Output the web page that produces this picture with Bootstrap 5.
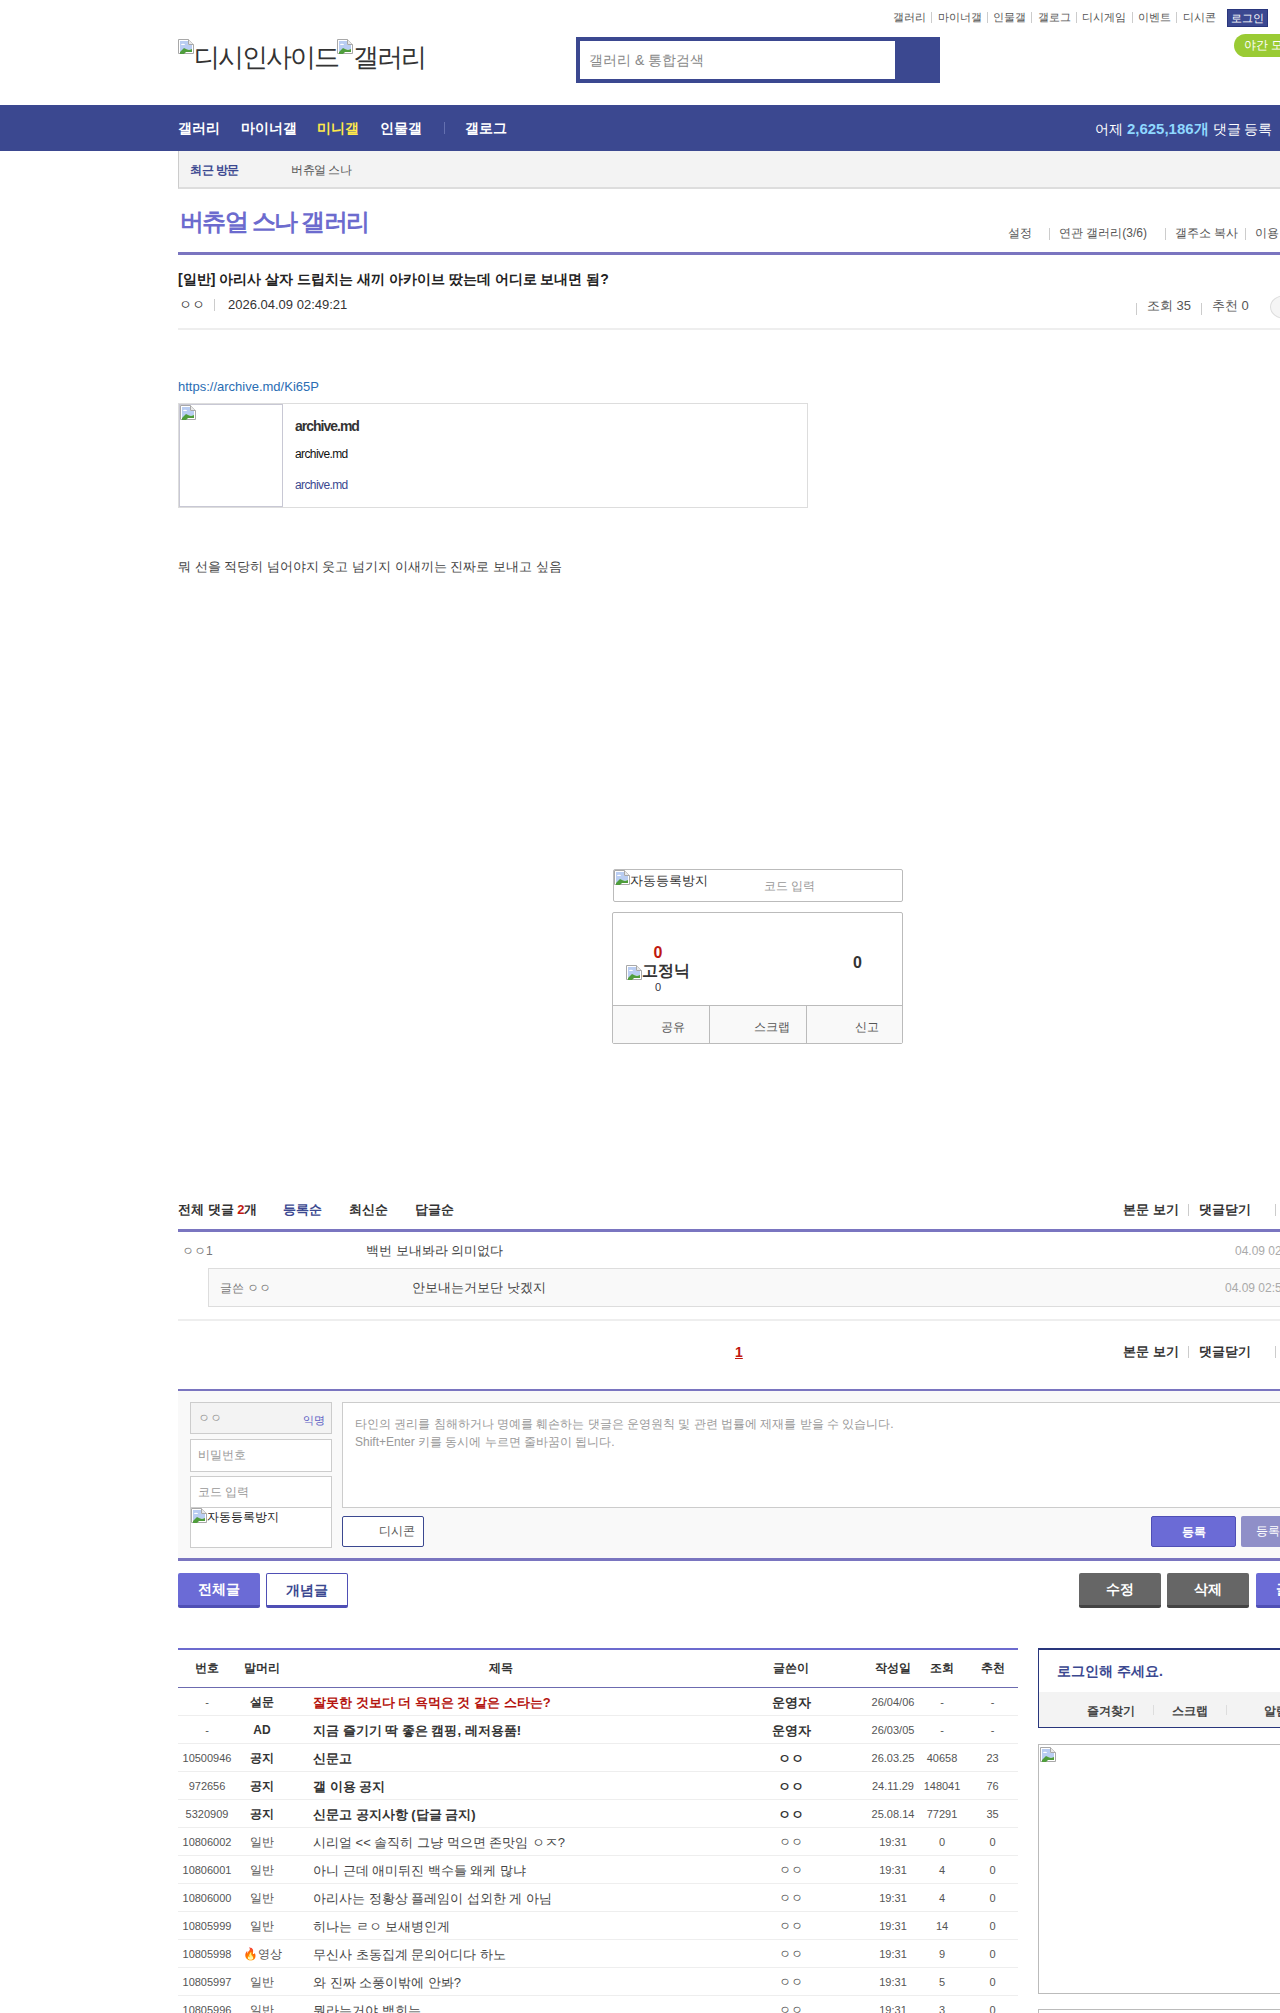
<!DOCTYPE html>
<html lang="ko">
<head>
<meta charset="utf-8">
<title>버츄얼 스나 갤러리</title>
<link href="https://cdn.jsdelivr.net/npm/bootstrap@5.3.0/dist/css/bootstrap.min.css" rel="stylesheet">
<style>
html,body{overflow:hidden;height:2013px;margin:0;background:#fff}
body{font-family:"Liberation Sans",sans-serif;font-size:13px;color:#333;line-height:1.2}
a{color:inherit;text-decoration:none}
.brk{width:16px;height:16px;flex:none;vertical-align:top;display:inline-block}
.site-top{height:105px;padding-left:178px;width:1338px}
.top-links{height:34px;padding:9px 0 0 715px;font-size:11px;color:#555}
.top-links .tl{margin-top:2px}
.top-links .sep{width:1px;height:11px;background:#ccc;margin:3px 5.3px 0}
.login-mini{background:#3b4890;border:1px solid #29367c;color:#fff;width:41px;height:18px;font-size:11px;margin-left:11px;line-height:16px}
.logo-txt{font-size:26px;color:#333;width:398px;height:39px;margin-top:5px;line-height:36px;white-space:nowrap;letter-spacing:-2.1px}
.search-box{width:364px;height:46px;background:#3b4890;padding:4px 45px 4px 4px;margin-top:3px}
.search-in{background:#fff;height:38px;padding:0 0 0 9px;font-size:14px;color:#888}
.night{position:absolute;left:1234px;top:34px;height:23px;width:90px;background:#9acb34;color:#fff;border-radius:12px 0 0 12px;font-size:12px;padding-left:10px;line-height:23px;white-space:nowrap}
.main-nav{background:#3b4890;height:46px;padding-left:178px;width:1338px;color:#fff;font-size:14px;font-weight:700;white-space:nowrap}
.main-nav .mi{margin-right:20.7px}
.main-nav .mi.on{color:#ffe94a}
.main-nav .dv{width:1px;height:12px;background:#6470b0;margin:0 20px 0 1px}
.nav-stat{position:absolute;left:1095px;top:120px;font-size:14px;font-weight:400;color:#fff;white-space:nowrap}
.nav-stat b{color:#8fd8ff;font-size:15px}
.wrap{margin-left:178px;width:1160px}
.recent{height:38px;background:#f3f3f3;border-left:1px solid #ccc;border-bottom:2px solid #ddd;font-size:12px;padding:3px 0 0 11px;color:#555}
.recent b{color:#3b4890;width:101px;display:inline-block;letter-spacing:-.5px}
.recent span{letter-spacing:-.5px}
.gal-head{height:66px;border-bottom:3px solid #7a75c0;position:relative}
.gal-title{font-size:24px;font-weight:700;color:#6c6bce;padding:18px 0 0 2px;line-height:30px;letter-spacing:-1.7px}
.gal-links{position:absolute;top:37px;left:0;font-size:12px;color:#555;white-space:nowrap;height:16px;width:1160px}
.gal-links span{position:absolute}
.gal-links i{position:absolute;width:1px;height:12px;background:#ccc;top:2px}
.post-head{height:75px;border-bottom:2px solid #eee;position:relative}
.post-title{font-size:14px;font-weight:700;color:#222;padding-top:15px;line-height:18px}
.post-meta{margin-top:8px;font-size:13px;color:#333;line-height:18px;padding-left:1px}
.vsep{width:1px;height:12px;background:#ccc;display:inline-block}
.meta-sep{margin:0 13px 0 9px}
.post-count{position:absolute;font-size:13px;color:#555;white-space:nowrap}
.share-circ{position:absolute;left:1092px;top:40px;width:30px;height:24px;border:1px solid #ddd;border-radius:50%;background:#f5f5f5}
.post-body{height:858px;position:relative}
.post-link{display:block;padding-top:49px;color:#2a6db3;line-height:16px}
.og{margin-top:8px;width:630px;height:105px;border:1px solid #ddd}
.og-img{width:104px;border:1px solid #c8c8d4}
.og-txt{padding:10px 0 0 12px;letter-spacing:-.6px;color:#111}
.og-t{font-size:14px;font-weight:700;height:27px;line-height:24px;color:#333;letter-spacing:-1px}
.og-d{font-size:12px;height:31px;line-height:26px}
.og-s{font-size:12px;color:#3b4890;line-height:26px}
.post-text{margin-top:51px;line-height:16px;color:#444}
.cap-box{position:absolute;left:435px;top:539px;width:290px;height:33px;border:1px solid #bbb;border-radius:2px;font-size:13px;line-height:22px}
.cap-box em{position:absolute;left:150px;top:5px;font-size:12px;font-style:normal;color:#999}
.rec-box{position:absolute;left:434px;top:582px;width:291px;height:132px;border:1px solid #bbb;border-radius:2px}
.rec-main{height:93px;position:relative;border-bottom:1px solid #bbb}
.r-up{position:absolute;left:0;width:90px;text-align:center;top:30px;font-weight:700;font-size:16px;color:#c01810;line-height:20px}
.r-lbl{position:absolute;left:13px;top:48px;display:flex;font-size:16px;font-weight:700;color:#333;line-height:20px;white-space:nowrap}
.r-fx{position:absolute;left:0;width:90px;text-align:center;top:66px;font-size:11px;color:#334;font-weight:400;line-height:16px}
.r-dn{position:absolute;left:240px;top:40px;font-weight:700;font-size:16px;color:#333;line-height:20px}
.rec-foot{height:37px;background:#f9f9f9;font-size:12px;color:#555}
.rec-foot div{width:97px;border-right:1px solid #bbb;line-height:42px;text-align:right;padding-right:24px}
.rec-foot div:nth-child(2){padding-right:16px}
.rec-foot div:last-child{border:0;width:95px;padding-right:23px}
.cm-bar{height:44px;border-bottom:3px solid #7a75c0;font-size:13px;font-weight:700;position:relative;color:#333;padding-top:3px}
.cm-tabs span{position:absolute;top:14px;line-height:16px;white-space:nowrap}
.cm-tabs .blue{color:#3b4890}
.red{color:#c01810}
.cm-ctl span{position:absolute;line-height:16px;white-space:nowrap}
.cm-ctl i{position:absolute;width:1px;height:12px;background:#ccc}
.cmt{height:36px;position:relative;font-size:13px;color:#444}
.cmt>*{position:absolute;white-space:nowrap}
.cmt .nm{font-size:12px;color:#777;top:12px;left:4px}
.cmt .tx{top:11px;line-height:16px}
.cmt .dt{font-size:12px;color:#aaa;top:12px}
.cmt-re{margin-left:30px;height:39px;background:#f9f9f9;border:1px solid #ddd;position:relative;font-size:13px}
.cmt-re>*{position:absolute;white-space:nowrap}
.pg{height:70px;border-top:2px solid #eee;margin-top:12px;position:relative;text-align:left}
.pg-num{position:absolute;left:557px;top:23px;font-size:14px;font-weight:700;color:#c01810;text-decoration:underline}
.wr-box{height:172px;border-top:2px solid #7a75c0;border-bottom:3px solid #7a75c0;background:#f9f9f9;position:relative}
.wr-box>*{position:absolute}
.fld{left:12px;width:142px;border:1px solid #ccc;background:#fff;font-size:12px;color:#999;padding:8px 7px 0;line-height:14px}
.fld-nm{background:#f3f3f3;top:11px;height:32px}
.fld-nm b{position:absolute;right:6px;top:10px;color:#5d5fc4;font-size:11px;font-weight:400}
.fld-img{top:116px;height:41px;padding:0;font-size:12px;line-height:18px;color:#222}
.wr-ta{left:164px;top:11px;width:990px;height:106px;border:1px solid #ccc;background:#fff;padding:12px 12px;font-size:12px;line-height:18px;color:#999}
.wr-dc{left:164px;top:125px;width:82px;height:31px;background:#fff;border:1px solid #3b4890;border-radius:2px;font-size:12px;line-height:29px;color:#555;text-align:right;padding-right:8px}
.wr-sub{top:125px;height:31px;width:85px;border-radius:2px;color:#fff;font-size:12px;font-weight:700;line-height:31px;text-align:center;white-space:nowrap}
.act-row{height:87px;position:relative}
.act{position:absolute;top:12px;height:35px;width:82px;border-radius:2px;color:#fff;font-size:14px;font-weight:700;line-height:32px;text-align:center;border-bottom:3px solid #4f4fb5;background:#6b6bd6}
.act.wh{background:#fff;color:#3b4890;border:1px solid #4f4fb5;border-bottom-width:3px}
.act.gr{background:#666;border-bottom-color:#444}
.lower{position:relative;width:1160px}
.lst{width:840px;table-layout:fixed;border-collapse:collapse;border-top:2px solid #6c6bce;font-size:13px}
.lst th{height:38px;font-size:12px;font-weight:700;text-align:center;border-bottom:1px solid #6c6bb0;color:#333;padding:0}
.lst td{height:28px;padding:3px 0 0;border-bottom:1px solid #eee;text-align:center;color:#555;font-size:11px;white-space:nowrap;overflow:hidden}
.lst .sb{font-size:12px;color:#555}
.lst .tt{text-align:left;padding-left:25px;font-size:13px;color:#444}
.lst .wt{font-size:12px;color:#555}
.lst .strong{font-weight:700;color:#333;font-size:12px}
.lst .tt.strong{font-size:13px}
.lst .wt.strong{font-size:13px}
.side{position:absolute;left:860px;top:0;width:300px}
.login-box{height:80px;border:1px solid #29367c;border-top-width:2px;background:#fff}
.login-t{height:42px;padding:12px 0 0 18px;font-size:14px;font-weight:700;color:#3b4890;line-height:18px}
.login-f{height:35px;background:#f3f3f3;font-size:12px;font-weight:700;color:#444;position:relative}
.login-f>*{position:absolute}
.login-f span{top:12px;white-space:nowrap}
.login-f i{width:1px;height:10px;background:#ddd;top:13px}
.ad-box{height:250px;margin-top:16px;border:1px solid #bbb;padding:2px 1px}
.ad-next{height:20px;margin-top:15px;border:1px solid #bbb;border-bottom:0}
</style>
</head>
<body>
<svg width="0" height="0" class="position-absolute"><defs><symbol id="bk" viewBox="0 0 16 16"><path d="M.5.5h10l5 5v9H.5z" fill="#fff" stroke="#a8a8a8"/><path d="M10.5.5v5h5" fill="#e8e8e8" stroke="#a8a8a8"/><path d="M2 2h8v4h4v4l-3 1-3-1-6 3z" fill="#b9cdf2"/><path d="M2 13l4-4 2 1 3 1 3-1v3H8l-2 2H2z" fill="#4f9d3c"/><path d="M3 6a2 1.300 0 0 1 4 0z" fill="#fff"/></symbol></defs></svg>
<header class="site-top">
  <div class="top-links d-flex align-items-start">
    <span class="tl">갤러리</span><span class="sep"></span><span class="tl">마이너갤</span><span class="sep"></span><span class="tl">인물갤</span><span class="sep"></span><span class="tl">갤로그</span><span class="sep"></span><span class="tl">디시게임</span><span class="sep"></span><span class="tl">이벤트</span><span class="sep"></span><span class="tl">디시콘</span>
    <span class="login-mini text-center">로그인</span>
  </div>
  <div class="d-flex">
    <div class="logo-txt"><svg class="brk"><use href="#bk"/></svg>디시인사이드<svg class="brk"><use href="#bk"/></svg>갤러리</div>
    <div class="search-box d-flex"><div class="search-in flex-grow-1 d-flex align-items-center">갤러리 &amp; 통합검색</div></div>
  </div>
</header>
<div class="night">야간 모드</div>
<nav class="main-nav d-flex align-items-center">
  <span class="mi">갤러리</span><span class="mi">마이너갤</span><span class="mi on">미니갤</span><span class="mi">인물갤</span><span class="dv"></span><span class="mi">갤로그</span>
</nav>
<div class="nav-stat">어제 <b>2,625,186개</b> 댓글 등록</div>
<main class="wrap">
  <div class="recent d-flex align-items-center"><b>최근 방문</b><span>버츄얼 스나</span></div>
  <div class="gal-head">
    <div class="gal-title">버츄얼 스나 갤러리</div>
    <div class="gal-links">
      <span style="left:830px">설정</span><i style="left:871px"></i><span style="left:881px">연관 갤러리(3/6)</span><i style="left:987px"></i><span style="left:997px">갤주소 복사</span><i style="left:1067px"></i><span style="left:1077px">이용 안내</span>
    </div>
  </div>
  <div class="post-head">
    <div class="post-title">[일반] 아리사 살자 드립치는 새끼 아카이브 땄는데 어디로 보내면 됨?</div>
    <div class="post-meta d-flex align-items-center"><span>ㅇㅇ</span><span class="vsep meta-sep"></span><span>2026.04.09 02:49:21</span></div>
    <span class="post-count" style="left:958px;top:48px"><span class="vsep d-block"></span></span><span class="post-count" style="left:969px;top:43px">조회 35</span>
    <span class="post-count" style="left:1023px;top:48px"><span class="vsep d-block"></span></span><span class="post-count" style="left:1034px;top:43px">추천 0</span>
    <div class="share-circ"></div>
  </div>
  <div class="post-body">
    <a class="post-link" href="#">https://archive.md/Ki65P</a>
    <div class="og d-flex">
      <div class="og-img"><svg class="brk d-block"><use href="#bk"/></svg></div>
      <div class="og-txt"><div class="og-t">archive.md</div><div class="og-d">archive.md</div><div class="og-s">archive.md</div></div>
    </div>
    <p class="post-text mb-0">뭐 선을 적당히 넘어야지 웃고 넘기지 이새끼는 진짜로 보내고 싶음</p>
    <div class="cap-box"><svg class="brk"><use href="#bk"/></svg>자동등록방지<em>코드 입력</em></div>
    <div class="rec-box">
      <div class="rec-main">
        <div class="r-up">0</div>
        <div class="r-lbl"><svg class="brk mt-1"><use href="#bk"/></svg>고정닉</div>
        <div class="r-fx">0</div>
        <div class="r-dn">0</div>
      </div>
      <div class="rec-foot d-flex"><div>공유</div><div>스크랩</div><div>신고</div></div>
    </div>
  </div>
  <div class="cm-bar">
    <div class="cm-tabs"><span style="left:0">전체 댓글 <span class="red position-static">2</span>개</span><span class="blue" style="left:105px">등록순</span><span style="left:171px">최신순</span><span style="left:237px">답글순</span></div>
    <div class="cm-ctl"><span style="left:945px;top:14px">본문 보기</span><i style="left:1010px;top:16px"></i><span style="left:1021px;top:14px">댓글닫기</span><i style="left:1097px;top:16px"></i></div>
  </div>
  <div class="cmt"><span class="nm">ㅇㅇ1</span><span class="tx" style="left:188px">백번 보내봐라 의미없다</span><span class="dt" style="left:1057px">04.09 02:53:11</span></div>
  <div class="cmt-re"><span style="left:11px;top:12px;font-size:12px;color:#777">글쓴 ㅇㅇ</span><span style="left:203px;top:11px;color:#444">안보내는거보단 낫겠지</span><span style="left:1016px;top:12px;font-size:12px;color:#aaa">04.09 02:55:40</span></div>
  <div class="pg">
    <span class="pg-num">1</span>
    <div class="cm-ctl fw-bold"><span style="left:945px;top:23px">본문 보기</span><i style="left:1010px;top:25px"></i><span style="left:1021px;top:23px">댓글닫기</span><i style="left:1097px;top:25px"></i></div>
  </div>
  <div class="wr-box">
    <div class="fld fld-nm">ㅇㅇ<b>익명</b></div>
    <div class="fld" style="top:48px;height:33px">비밀번호</div>
    <div class="fld" style="top:85px;height:32px">코드 입력</div>
    <div class="fld fld-img"><svg class="brk"><use href="#bk"/></svg>자동등록방지</div>
    <div class="wr-ta">타인의 권리를 침해하거나 명예를 훼손하는 댓글은 운영원칙 및 관련 법률에 제재를 받을 수 있습니다.<br>Shift+Enter 키를 동시에 누르면 줄바꿈이 됩니다.</div>
    <div class="wr-dc">디시콘</div>
    <div class="wr-sub" style="left:973px;background:#6b6bd6;border:1px solid #4f4fb5">등록</div>
    <div class="wr-sub" style="left:1063px;background:#8f8fc8;font-weight:400">등록+추천</div>
  </div>
  <div class="act-row">
    <div class="act" style="left:0">전체글</div>
    <div class="act wh" style="left:88px">개념글</div>
    <div class="act gr" style="left:901px">수정</div>
    <div class="act gr" style="left:989px">삭제</div>
    <div class="act" style="left:1078px">글쓰기</div>
  </div>
  <div class="lower">
    <table class="lst">
      <colgroup><col style="width:58px"><col style="width:52px"><col style="width:425px"><col style="width:156px"><col style="width:48px"><col style="width:50px"><col style="width:51px"></colgroup>
      <thead><tr><th>번호</th><th>말머리</th><th>제목</th><th>글쓴이</th><th>작성일</th><th>조회</th><th>추천</th></tr></thead>
      <tbody>
        <tr><td>-</td><td class="strong">설문</td><td class="tt strong" style="color:#b5140f">잘못한 것보다 더 욕먹은 것 같은 스타는?</td><td class="wt strong">운영자</td><td>26/04/06</td><td>-</td><td>-</td></tr>
        <tr><td>-</td><td class="strong">AD</td><td class="tt strong">지금 즐기기 딱 좋은 캠핑, 레저용품!</td><td class="wt strong">운영자</td><td>26/03/05</td><td>-</td><td>-</td></tr>
        <tr><td>10500946</td><td class="strong">공지</td><td class="tt strong">신문고</td><td class="wt strong">ㅇㅇ</td><td>26.03.25</td><td>40658</td><td>23</td></tr>
        <tr><td>972656</td><td class="strong">공지</td><td class="tt strong">갤 이용 공지</td><td class="wt strong">ㅇㅇ</td><td>24.11.29</td><td>148041</td><td>76</td></tr>
        <tr><td>5320909</td><td class="strong">공지</td><td class="tt strong">신문고 공지사항 (답글 금지)</td><td class="wt strong">ㅇㅇ</td><td>25.08.14</td><td>77291</td><td>35</td></tr>
        <tr><td>10806002</td><td class="sb">일반</td><td class="tt">시리얼 &lt;&lt; 솔직히 그냥 먹으면 존맛임 ㅇㅈ?</td><td class="wt">ㅇㅇ</td><td>19:31</td><td>0</td><td>0</td></tr>
        <tr><td>10806001</td><td class="sb">일반</td><td class="tt">아니 근데 애미뒤진 백수들 왜케 많냐</td><td class="wt">ㅇㅇ</td><td>19:31</td><td>4</td><td>0</td></tr>
        <tr><td>10806000</td><td class="sb">일반</td><td class="tt">아리사는 정황상 플레임이 섭외한 게 아님</td><td class="wt">ㅇㅇ</td><td>19:31</td><td>4</td><td>0</td></tr>
        <tr><td>10805999</td><td class="sb">일반</td><td class="tt">히나는 ㄹㅇ 보새병인게</td><td class="wt">ㅇㅇ</td><td>19:31</td><td>14</td><td>0</td></tr>
        <tr><td>10805998</td><td class="sb">🔥영상</td><td class="tt">무신사 초동집계 문의어디다 하노</td><td class="wt">ㅇㅇ</td><td>19:31</td><td>9</td><td>0</td></tr>
        <tr><td>10805997</td><td class="sb">일반</td><td class="tt">와 진짜 소풍이밖에 안봐?</td><td class="wt">ㅇㅇ</td><td>19:31</td><td>5</td><td>0</td></tr>
        <tr><td>10805996</td><td class="sb">일반</td><td class="tt">뭔라는거야 백희는</td><td class="wt">ㅇㅇ</td><td>19:31</td><td>3</td><td>0</td></tr>
      </tbody>
    </table>
    <aside class="side">
      <div class="login-box">
        <div class="login-t">로그인해 주세요.</div>
        <div class="login-f"><span style="left:48px">즐겨찾기</span><i style="left:114px"></i><span style="left:133px">스크랩</span><i style="left:187px"></i><span style="left:225px">알림</span></div>
      </div>
      <div class="ad-box"><svg class="brk d-block"><use href="#bk"/></svg></div>
      <div class="ad-next"></div>
    </aside>
  </div>
</main>
<script src="https://cdn.jsdelivr.net/npm/bootstrap@5.3.0/dist/js/bootstrap.bundle.min.js"></script>
</body>
</html>
